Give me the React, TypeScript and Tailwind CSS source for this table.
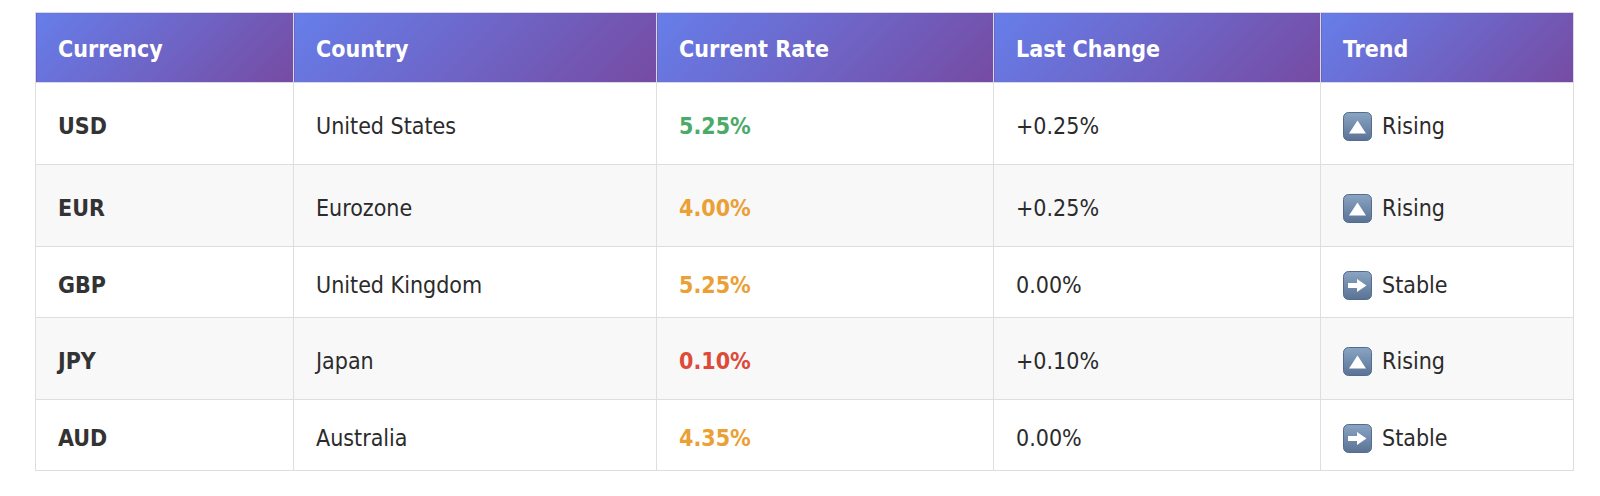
import React from "react";

type Trend = "rising" | "stable";

interface RateRow {
  code: string;
  country: string;
  rate: string;
  rateColor: string;
  change: string;
  trend: Trend;
}

const ROWS: RateRow[] = [
  { code: "USD", country: "United States", rate: "5.25%", rateColor: "text-[#4caa68]", change: "+0.25%", trend: "rising" },
  { code: "EUR", country: "Eurozone", rate: "4.00%", rateColor: "text-[#eba035]", change: "+0.25%", trend: "rising" },
  { code: "GBP", country: "United Kingdom", rate: "5.25%", rateColor: "text-[#eba035]", change: "0.00%", trend: "stable" },
  { code: "JPY", country: "Japan", rate: "0.10%", rateColor: "text-[#dd4a38]", change: "+0.10%", trend: "rising" },
  { code: "AUD", country: "Australia", rate: "4.35%", rateColor: "text-[#eba035]", change: "0.00%", trend: "stable" },
];

const HEADERS = [
  { label: "Currency", width: "w-[258px]" },
  { label: "Country", width: "w-[363px]" },
  { label: "Current Rate", width: "w-[337px]" },
  { label: "Last Change", width: "w-[327px]" },
  { label: "Trend", width: "w-[253px]" },
];

const TrendIcon: React.FC<{ trend: Trend; id: string }> = ({ trend, id }) => (
  <svg width="29" height="29" viewBox="0 0 29 29" className="shrink-0">
    <defs>
      <linearGradient id={id} x1="0" y1="0" x2="0" y2="1">
        <stop offset="0%" stopColor="#8aa4c4" />
        <stop offset="100%" stopColor="#5a7394" />
      </linearGradient>
    </defs>
    <rect x="0.5" y="0.5" width="28" height="28" rx="5" fill={`url(#${id})`} stroke="#536c8d" />
    {trend === "rising" ? (
      <path d="M14.5 8.5 L23 21.5 H6 Z" fill="#fff" />
    ) : (
      <path d="M5 12 H14 V8 L23.5 14.5 L14 21 V17 H5 Z" fill="#fff" />
    )}
  </svg>
);

export default function App() {
  return (
    <div
      className="min-h-[496px] bg-white pl-[35px] pt-[12px] text-[23px] text-[#2b2b2b]"
      style={{ fontFamily: '"DejaVu Sans Condensed", "DejaVu Sans", Verdana, sans-serif', fontStretch: "condensed" }}
    >
      <table className="w-[1538px] table-fixed border-collapse border border-[#dedede]">
        <thead>
          <tr>
            {HEADERS.map((h) => (
              <th
                key={h.label}
                className={`${h.width} h-[70px] border border-[#d9d9e6] bg-[linear-gradient(135deg,#667eea_0%,#764ba2_100%)] px-[22px] pt-[3px] text-left align-middle font-bold text-white`}
              >
                {h.label}
              </th>
            ))}
          </tr>
        </thead>
        <tbody>
          {ROWS.map((row, i) => {
            const rowH = row.trend === "rising" ? "h-[82px]" : "h-[71px]";
            const bg = i % 2 === 1 ? "bg-[#f8f8f8]" : "bg-white";
            return (
              <tr key={row.code} className={bg}>
                <td className={`${rowH} border border-[#dedede] px-[22px] pt-[6px] align-middle font-bold text-[#333]`}>
                  {row.code}
                </td>
                <td className="border border-[#dedede] px-[22px] pt-[6px] align-middle">{row.country}</td>
                <td className={`border border-[#dedede] px-[22px] pt-[6px] align-middle font-bold ${row.rateColor}`}>
                  {row.rate}
                </td>
                <td className="border border-[#dedede] px-[22px] pt-[6px] align-middle">{row.change}</td>
                <td className="border border-[#dedede] px-[22px] pt-[6px] align-middle">
                  <div className="flex items-center gap-[10px]">
                    <TrendIcon trend={row.trend} id={`trend-${row.code}`} />
                    <span>{row.trend === "rising" ? "Rising" : "Stable"}</span>
                  </div>
                </td>
              </tr>
            );
          })}
        </tbody>
      </table>
    </div>
  );
}
